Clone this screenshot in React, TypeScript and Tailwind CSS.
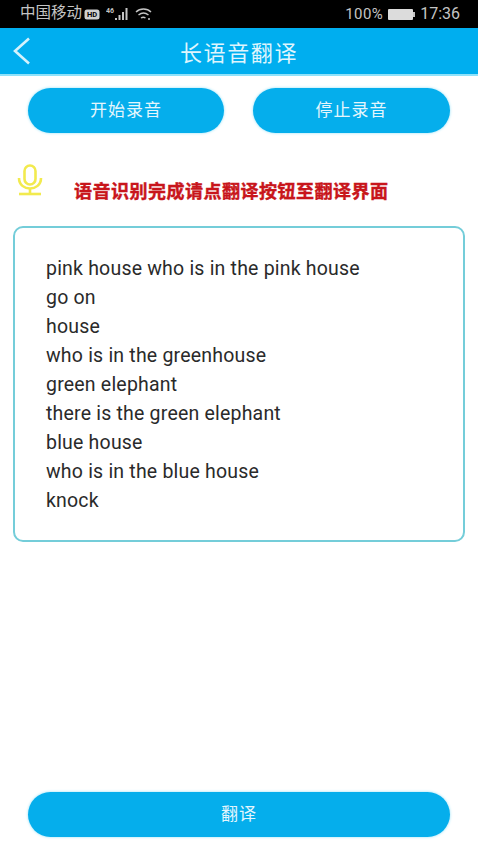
const LINES = [
  'pink house who is in the pink house',
  'go on',
  'house',
  'who is in the greenhouse',
  'green elephant',
  'there is the green elephant',
  'blue house',
  'who is in the blue house',
  'knock',
]

const SANS = "font-['Roboto','Noto_Sans_CJK_SC',sans-serif]"

function StatusBar() {
  return (
    <div className="h-[28px] bg-black flex items-center justify-between pl-[20px] pr-[18px] text-[15px] text-[#c4c4c4]">
      <div className="flex items-center gap-[2px]">
        <span className="text-[15.5px]">中国移动</span>
        <svg width="16" height="11" viewBox="0 0 16 11">
          <rect x="0.5" y="0.5" width="15" height="10" rx="2.5" fill="#d0d0d0" />
          <text x="8" y="8.2" textAnchor="middle" fontSize="7.5" fontWeight="700" fill="#000">HD</text>
        </svg>
        <svg width="24" height="16" viewBox="0 0 24 16" className="ml-[4px]">
          <text x="0" y="7" fontSize="7" fontWeight="700" fill="#c4c4c4">46</text>
          <rect x="9" y="12" width="2" height="2" fill="#c4c4c4" />
          <rect x="12.5" y="9" width="2" height="5" fill="#c4c4c4" />
          <rect x="16" y="6" width="2" height="8" fill="#c4c4c4" />
          <rect x="19.5" y="2" width="2" height="12" fill="#c4c4c4" />
        </svg>
        <svg width="17" height="14" viewBox="0 0 17 14" className="ml-[3px]" fill="none" stroke="#c4c4c4" strokeWidth="1.4">
          <path d="M1 5 C5 1, 12 1, 16 5" />
          <path d="M3.5 8 C6.5 5.5, 10.5 5.5, 13.5 8" />
          <path d="M6 11 C7.5 10, 9 10, 10.5 11" />
          <circle cx="14" cy="12" r="1" fill="#c4c4c4" stroke="none" />
        </svg>
      </div>
      <div className="flex items-center">
        <span className="mr-[5px] tracking-[0.4px]">100%</span>
        <div className="w-[25px] h-[11px] bg-[#dcdcdc] rounded-[1px]" />
        <div className="w-[2px] h-[5px] bg-[#c4c4c4] mr-[5px]" />
        <span className="text-[16px]">17:36</span>
      </div>
    </div>
  )
}

function PillButton({ label, className }: { label: string; className: string }) {
  return (
    <button className={`h-[45px] rounded-full bg-[#05aeec] text-[#e4f6fd] text-[17px] tracking-[1px] shadow-[0_0_3px_#8fdff7] ${className}`}>
      {label}
    </button>
  )
}

export default function App() {
  return (
    <div className={`h-[850px] w-[478px] bg-white flex flex-col overflow-hidden ${SANS}`}>
      <StatusBar />

      {/* Header */}
      <div className="h-[48px] bg-[#00aeef] border-b-2 border-[#8fe2fa] flex items-center relative">
        <svg width="20" height="28" viewBox="0 0 20 28" fill="none" stroke="#d4f2fc" strokeWidth="2.6" className="ml-[12px]">
          <path d="M17 1.5 L3 14 L17 26.5" />
        </svg>
        <span className="absolute inset-x-0 top-[9px] text-center text-[22px] tracking-[1.6px] text-[#dff5fd]">长语音翻译</span>
      </div>

      {/* Record buttons */}
      <div className="flex justify-between px-[28px] mt-[12px]">
        <PillButton label="开始录音" className="w-[196px]" />
        <PillButton label="停止录音" className="w-[197px]" />
      </div>

      {/* Hint */}
      <div className="flex items-start pl-[17px] mt-[31px] h-[62px]">
        <svg width="26" height="32" viewBox="0 0 26 32" fill="none" stroke="#f2ea4e" strokeWidth="2.6">
          <rect x="7.5" y="1.5" width="11" height="19" rx="5.5" />
          <path d="M2 14 C2 28, 24 28, 24 14" />
          <path d="M13 25 V30" />
          <path d="M2 30 H24" />
        </svg>
        <span className="ml-[31px] mt-[16px] text-[18px] leading-[24px] font-bold tracking-[0.5px] text-[#c8151b] [-webkit-text-stroke:0.4px_#c8151b]">
          语音识别完成请点翻译按钮至翻译界面
        </span>
      </div>

      {/* Result box */}
      <div className="mx-[13px] h-[316px] border-2 border-[#74cdd9] rounded-[10px] pl-[31px] pt-[26px]">
        {LINES.map((line) => (
          <p key={line} className="text-[19.5px] tracking-[0.2px] leading-[29px] text-[#2a2a2a]">{line}</p>
        ))}
      </div>

      <div className="flex-1" />

      <div className="px-[28px] pb-[13px]">
        <PillButton label="翻译" className="w-full" />
      </div>
    </div>
  )
}
